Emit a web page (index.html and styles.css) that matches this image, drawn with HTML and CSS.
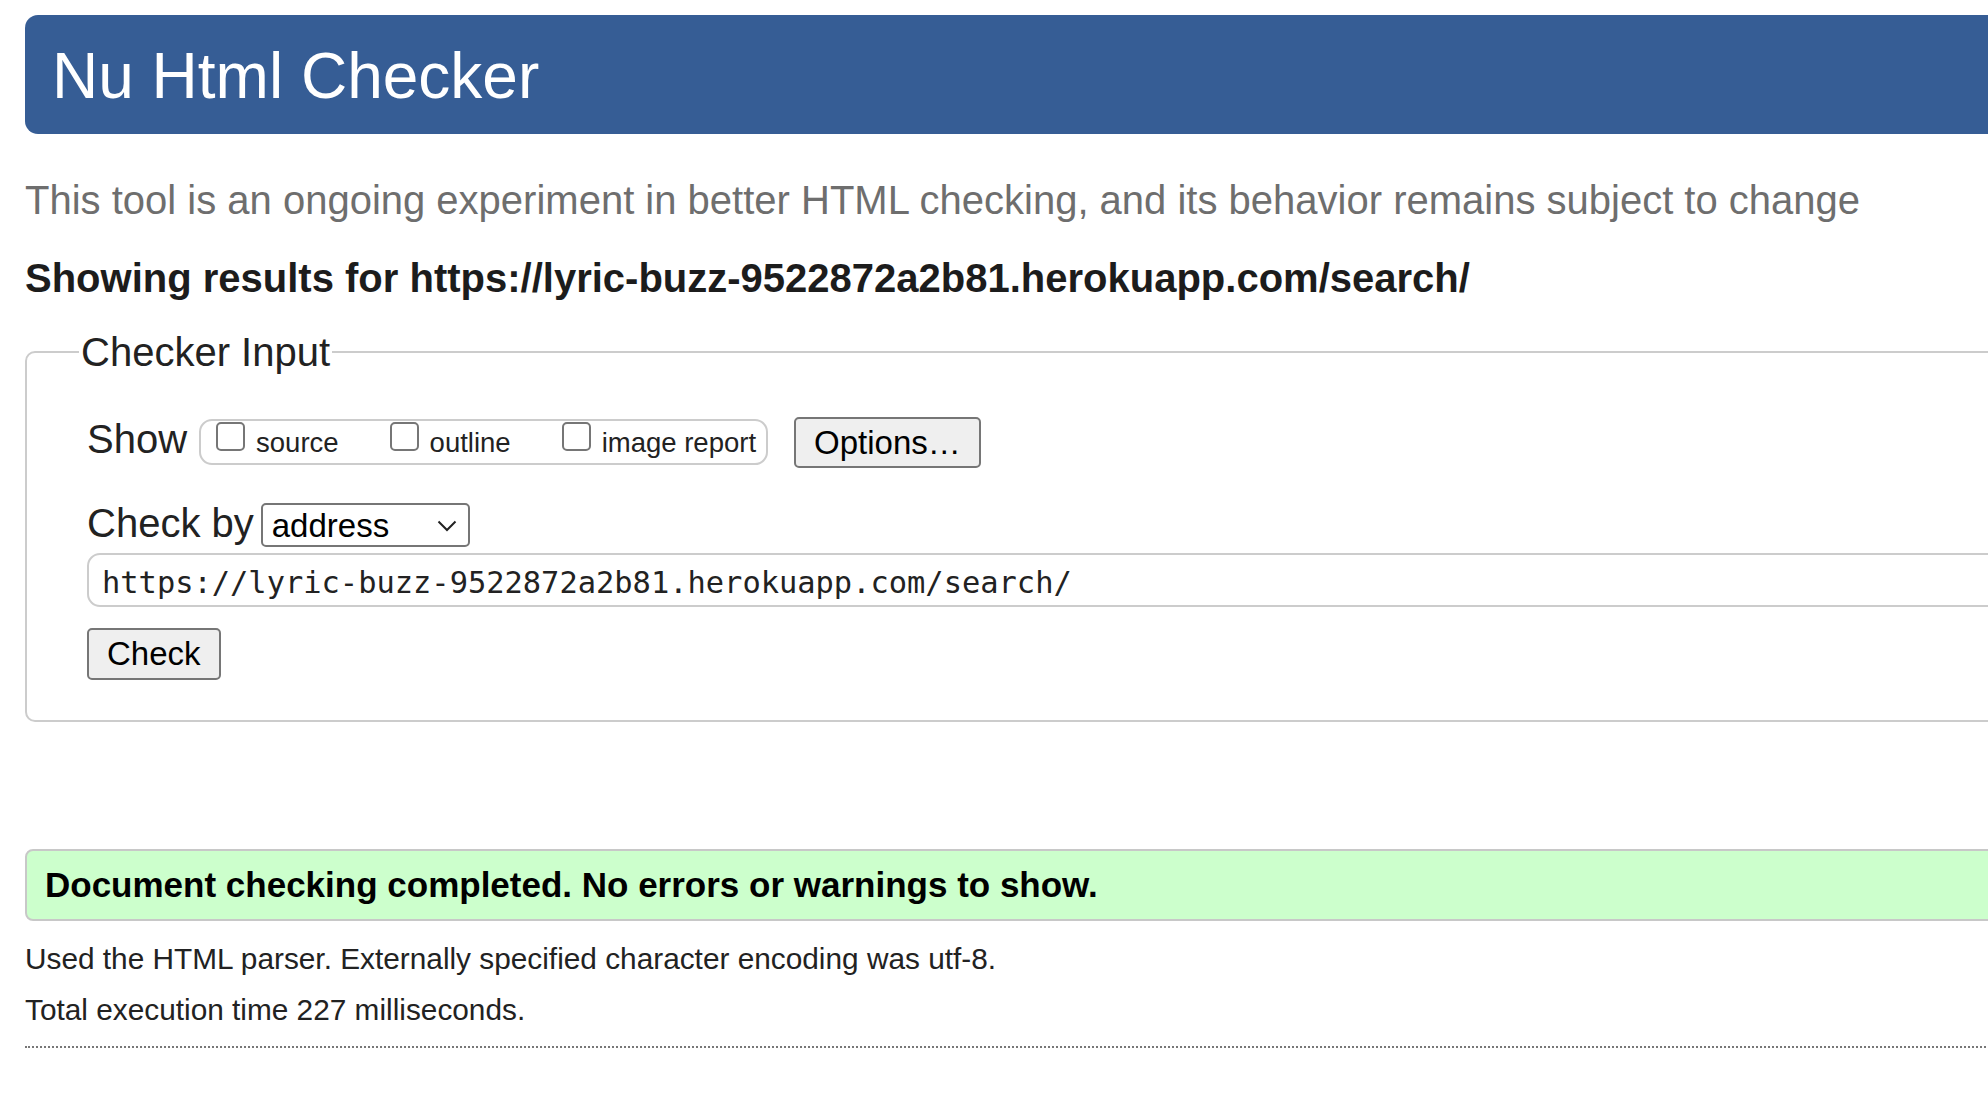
FILE: index.html
```html
<!DOCTYPE html>
<html lang="en">
<head>
<meta charset="utf-8">
<title>Showing results for https://lyric-buzz-9522872a2b81.herokuapp.com/search/ - Nu Html Checker</title>
<link rel="stylesheet" href="styles.css">
</head>
<body>
<div class="page">
  <header class="masthead"><h1>Nu Html Checker</h1></header>
  <p class="lead">This tool is an ongoing experiment in better HTML checking, and its behavior remains subject to change</p>
  <p class="results-for">Showing results for https://lyric-buzz-9522872a2b81.herokuapp.com/search/</p>
  <form class="checker-form">
    <fieldset class="checker">
      <legend>Checker Input</legend>
      <div class="row show-row">
        <span class="row-label">Show</span>
        <span class="group">
          <label class="opt"><input type="checkbox"><span>source</span></label>
          <label class="opt"><input type="checkbox"><span>outline</span></label>
          <label class="opt"><input type="checkbox"><span>image report</span></label>
        </span>
        <button type="button" class="btn options">Options…</button>
      </div>
      <div class="row by-row">
        <span class="row-label">Check by</span>
        <div class="select">
          <span>address</span>
          <svg class="chev" width="20" height="12" viewBox="0 0 20 12"><polyline points="1.5,1.5 10,10 18.5,1.5" fill="none" stroke="#222" stroke-width="2"/></svg>
        </div>
      </div>
      <input class="url" type="text" value="https://lyric-buzz-9522872a2b81.herokuapp.com/search/">
      <button type="button" class="btn check">Check</button>
    </fieldset>
  </form>
  <div class="success">Document checking completed. No errors or warnings to show.</div>
  <p class="meta first">Used the HTML parser. Externally specified character encoding was utf-8.</p>
  <p class="meta">Total execution time 227 milliseconds.</p>
  <hr class="dotted">
</div>
</body>
</html>
```

FILE: styles.css
```css
html, body {
  margin: 0;
  padding: 0;
  overflow: hidden;
  background: #fff;
}
body {
  font-family: "Liberation Sans", Arial, sans-serif;
  color: #222;
}
.page {
  width: 2200px;
  padding: 15px 0 0 25px;
}
.masthead {
  background: #365d95;
  border-radius: 13px;
  padding: 25px 0 22px 27px;
}
.masthead h1 {
  margin: 0;
  font-size: 64px;
  font-weight: normal;
  line-height: 72px;
  color: #fff;
}
.lead {
  margin: 43px 0 0;
  font-size: 40px;
  line-height: 46px;
  color: #6e6e6e;
}
.results-for {
  margin: 32px 0 0;
  font-size: 40px;
  line-height: 46px;
  font-weight: bold;
  color: #1c1c1c;
}
.checker-form {
  margin: 28px 0 0;
}
.checker {
  margin: 0;
  min-width: 0;
  border: 2px solid #cccccc;
  border-radius: 10px;
  padding: 41px 0 40px 60px;
}
.checker legend {
  font-size: 40px;
  line-height: 46px;
  padding: 0 2px;
  margin-left: -8px;
  color: #222;
}
.row {
  display: flex;
  align-items: flex-start;
  font-size: 40px;
  line-height: 46px;
}
.group {
  display: flex;
  gap: 51px;
  height: 46px;
  box-sizing: border-box;
  margin: 3px 0 0 12px;
  border: 2px solid #cccccc;
  border-radius: 13px;
  padding: 0 10px 0 15px;
  font-size: 27.5px;
  line-height: 32px;
}
.opt {
  display: flex;
  align-items: flex-start;
}
.opt input {
  appearance: none;
  -webkit-appearance: none;
  box-sizing: border-box;
  width: 29px;
  height: 29px;
  margin: 1px 11px 0 0;
  border: 2px solid #767676;
  border-radius: 5px;
  background: #fff;
}
.opt span {
  margin-top: 6px;
}
.btn {
  font-family: "Liberation Sans", Arial, sans-serif;
  font-size: 33px;
  line-height: 38px;
  color: #000;
  background: #efefef;
  border: 2px solid #767676;
  border-radius: 5px;
  padding: 0 18px;
  box-sizing: border-box;
}
.options {
  height: 51px;
  margin: 1px 0 0 26px;
}
.by-row {
  margin-top: 32px;
}
.select {
  display: flex;
  align-items: center;
  justify-content: space-between;
  width: 209px;
  height: 44px;
  box-sizing: border-box;
  margin: 3px 0 0 7px;
  border: 2px solid #767676;
  border-radius: 5px;
  padding: 2px 11px 0 9px;
  font-size: 33px;
  line-height: 38px;
  color: #000;
}
.chev {
  display: block;
  margin-top: -1px;
}
.url {
  display: block;
  width: 2100px;
  height: 54px;
  box-sizing: border-box;
  margin: 6px 0 0;
  border: 2px solid #cccccc;
  border-radius: 13px;
  padding: 4px 13px 0;
  font-family: "DejaVu Sans Mono", "Liberation Mono", monospace;
  font-size: 30.4px;
  color: #222;
  background: #fff;
  outline: none;
}
.check {
  display: block;
  height: 52px;
  margin-top: 21px;
}
.success {
  margin-top: 127px;
  height: 72px;
  box-sizing: border-box;
  display: flex;
  align-items: center;
  border: 2px solid #c8c8c8;
  border-radius: 8px;
  background: #ccffcc;
  padding: 0 18px;
  font-size: 35px;
  line-height: 40px;
  font-weight: bold;
  color: #000;
}
.meta {
  margin: 17px 0 0;
  font-size: 29.8px;
  line-height: 34px;
  color: #222;
}
.meta.first {
  margin-top: 21px;
}
.dotted {
  margin: 19px 0 0;
  height: 0;
  border: none;
  border-top: 2px dotted #777;
}
```
